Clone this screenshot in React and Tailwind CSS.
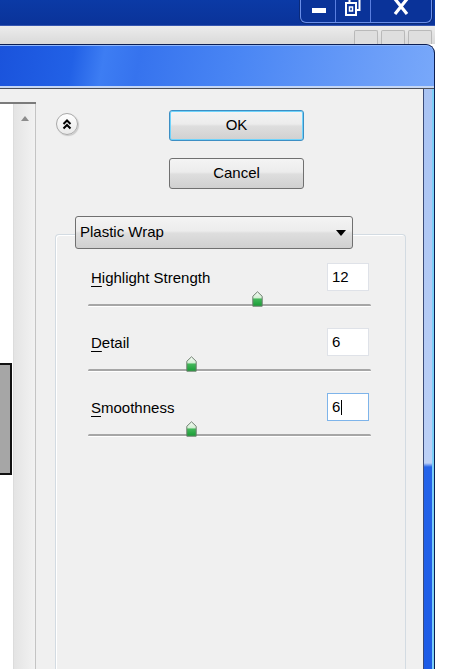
import React from 'react';

// Plastic Wrap filter dialog, XP style
const sliders = [
  { key: 'H', rest: 'ighlight Strength', text: '12', v: 12, min: 0, max: 20 },
  { key: 'D', rest: 'etail', text: '6', v: 6, min: 1, max: 15 },
  { key: 'S', rest: 'moothness', text: '6', v: 6, min: 1, max: 15, focused: true },
];

const btnBg = 'bg-[linear-gradient(#f4f4f4,#ececec_45%,#dedede_52%,#d0d0d0)]';

function Thumb({ left }) {
  return (
    <svg className="absolute top-[-7px]" style={{ left: left - 5 }} width="11" height="16" viewBox="0 0 11 16">
      <defs>
        <linearGradient id="thumbg" x1="0" y1="0" x2="0" y2="1">
          <stop offset="0" stopColor="#f6fcf6" />
          <stop offset="0.42" stopColor="#d3eed3" />
          <stop offset="0.5" stopColor="#43b85a" />
          <stop offset="1" stopColor="#179b34" />
        </linearGradient>
      </defs>
      <path d="M5.5 0.8 L10.2 5.3 V15.2 H0.8 V5.3 Z" fill="url(#thumbg)" stroke="#6f7f70" strokeWidth="1" />
    </svg>
  );
}

function Slider({ v, min, max }) {
  const left = 5 + ((v - min) / (max - min)) * 273;
  return (
    <div className="relative -ml-[3px] mt-[7px] h-[14px] w-[283px]">
      <div className="absolute left-0 right-0 top-[6px] h-[3px] rounded-full border-t-2 border-[#a6a6a6] bg-white" />
      <Thumb left={left} />
    </div>
  );
}

function TopControls() {
  return (
    <div className="flex h-[23px] rounded-b-[6px] border border-t-0 border-[#6a8ee8] bg-[#0a3399] shadow-[0_0_0_1px_#0a2a7a]">
      <div className="flex w-[35px] items-center justify-center border-r border-[#5a7fe0] pl-[2px]">
        <div className="mt-[-1px] h-[5px] w-[14px] bg-white" />
      </div>
      <div className="flex w-[35px] items-start justify-center border-r border-[#5a7fe0]">
        <svg width="16" height="16" viewBox="0 0 16 16">
          <rect x="4.5" y="-2" width="10" height="12" fill="none" stroke="#fff" strokeWidth="2" />
          <rect x="1" y="3" width="10" height="12" fill="#0a3399" stroke="#fff" strokeWidth="2" />
          <rect x="4.5" y="7" width="3" height="4" fill="none" stroke="#fff" strokeWidth="1.5" />
        </svg>
      </div>
      <div className="flex w-[60px] items-start justify-center">
        <svg width="16" height="15" viewBox="0 0 16 15">
          <path d="M2 -1 L14 14 M14 -1 L2 14" stroke="#fff" strokeWidth="3.2" />
        </svg>
      </div>
    </div>
  );
}

export default function App() {
  return (
    <div className="h-[669px] w-[454px] overflow-hidden bg-white font-['Liberation_Sans',Arial,sans-serif] text-[15px] text-black">
      <div className="flex h-full w-[435px] flex-col">
        {/* app title bar */}
        <div className="flex h-[26px] shrink-0 justify-end border-b border-[#3656b0] bg-[linear-gradient(#0b3aa6,#0a3399)] pr-[3px]">
          <TopControls />
        </div>

        {/* document bar */}
        <div className="flex h-[18px] shrink-0 items-end justify-end gap-[3px] bg-[linear-gradient(#ececec,#d9d9d9)] pr-[3px]">
          {[0, 1, 2].map((i) => (
            <div key={i} className="h-[14px] w-[24px] rounded-t-[2px] border border-b-0 border-[#b9b9b9] bg-[#dedede]" />
          ))}
        </div>

        {/* dialog */}
        <div className="flex flex-1 flex-col overflow-hidden rounded-tr-[9px] border-r border-t border-[#0b1e52] bg-[#0b1e52]">
          <div className="h-[41px] shrink-0 rounded-tr-[8px] bg-[linear-gradient(100deg,#1a53dc_0%,#2261e6_17%,#3d7df3_24%,#3673ee_32%,#4a86f4_55%,#6a9df8_85%,#78a8fa_100%)] shadow-[inset_0_1px_0_#8fb6fa]" />
          <div className="h-[2px] shrink-0 bg-[#c5d6f3]" />

          <div className="flex flex-1 border-t border-[#4a4f5a]">
            {/* preview */}
            <div className="flex w-[36px] shrink-0 flex-col bg-[#f0f0f0] pt-[13px]">
              <div className="flex flex-1 border-t-2 border-[#7b7b7b]">
                <div className="w-[13px] bg-white pt-[259px]">
                  <div className="h-[112px] w-[12px] border-y-2 border-r-2 border-[#111] bg-[#a6a6a6]" />
                </div>
                <div className="flex w-[23px] justify-center border-l border-r border-l-[#dcdcdc] border-r-[#c4c4c4] bg-[linear-gradient(90deg,#e4e4e4,#f2f2f2)] pt-[12px]">
                  <svg width="8" height="5" viewBox="0 0 8 5">
                    <path d="M4 0 L8 5 H0 Z" fill="#8c8c8c" />
                  </svg>
                </div>
              </div>
            </div>

            {/* controls */}
            <div className="flex flex-1 flex-col bg-[#f0f0f0]">
              <div className="flex items-start pt-[21px]">
                <div className="ml-[20px] mt-[3px] flex h-[22px] w-[22px] items-center justify-center rounded-full border border-[#a9a9a9] bg-[linear-gradient(#ffffff,#e9e9e9)] shadow-[1px_1px_1px_#c8c8c8]">
                  <svg width="10" height="11" viewBox="0 0 10 11">
                    <path d="M1.5 5 L5 1.5 L8.5 5 M1.5 9.5 L5 6 L8.5 9.5" fill="none" stroke="#000" strokeWidth="2" />
                  </svg>
                </div>
                <div className="ml-[91px] flex flex-col gap-[17px]">
                  <div className={`flex h-[31px] w-[135px] items-center justify-center rounded-[3px] border border-[#3d8fc4] ${btnBg} shadow-[inset_0_0_0_1px_#6fd3fb]`}>
                    OK
                  </div>
                  <div className={`flex h-[31px] w-[135px] items-center justify-center rounded-[3px] border border-[#707070] ${btnBg}`}>
                    Cancel
                  </div>
                </div>
              </div>

              {/* group box */}
              <div className="ml-[19px] mt-[45px] flex w-[351px] flex-1 flex-col rounded-t-[4px] border border-b-0 border-[#d3dbe2] shadow-[inset_1px_1px_0_#fff]">
                <div className={`-mt-[19px] ml-[19px] flex h-[33px] w-[278px] items-center justify-between rounded-[3px] border border-[#707070] pl-[4px] pr-[6px] ${btnBg}`}>
                  <span>Plastic Wrap</span>
                  <svg width="10" height="6" viewBox="0 0 10 6">
                    <path d="M0 0 H10 L5 6 Z" fill="#000" />
                  </svg>
                </div>

                <div className="mt-[14px] flex flex-col gap-[16px] pl-[35px] pr-[36px]">
                  {sliders.map((s) => (
                    <div key={s.key} className="flex flex-col">
                      <div className="flex h-[28px] items-center justify-between">
                        <span className="mt-[2px]">
                          <span className="underline underline-offset-[3px]">{s.key}</span>
                          {s.rest}
                        </span>
                        <div
                          className={`flex h-[28px] w-[42px] items-center border bg-white pl-[4px] ${
                            s.focused ? 'border-[#7eb4ea]' : 'border-[#dfe2e8]'
                          }`}
                        >
                          {s.text}
                          {s.focused && <span className="ml-[1px] h-[15px] w-[1px] bg-black" />}
                        </div>
                      </div>
                      <Slider v={s.v} min={s.min} max={s.max} />
                    </div>
                  ))}
                </div>
              </div>
            </div>

            {/* right frame */}
            <div className="w-[11px] shrink-0 border-l border-r-2 border-l-[#3b4b78] border-r-[#7cd0f8] bg-[linear-gradient(to_bottom,#a9c3f3_0px,#bcd0f6_374px,#2463e9_378px,#1d5be6_100%)]" />
          </div>
        </div>
      </div>
    </div>
  );
}
